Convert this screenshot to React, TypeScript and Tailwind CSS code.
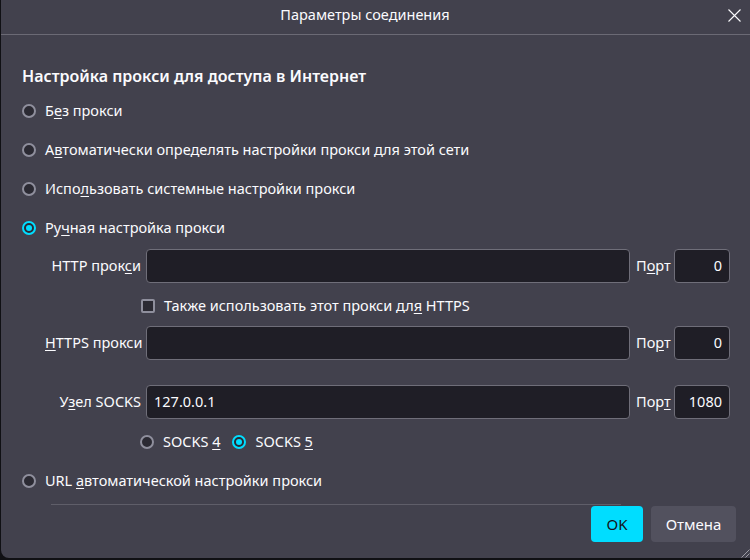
import type { ReactNode } from 'react';

const font = { fontFamily: '"Noto Sans", "Open Sans", sans-serif' };

function Radio({ checked }: { checked?: boolean }) {
    if (checked) {
        return (
            <span className="flex h-[14px] w-[14px] shrink-0 items-center justify-center rounded-full border-2 border-[#00ddff] bg-[#2b2a33]">
                <span className="h-[6px] w-[6px] rounded-full bg-[#00ddff]" />
            </span>
        );
    }
    return <span className="h-[14px] w-[14px] shrink-0 rounded-full border-2 border-[#8f8f9d] bg-[#2b2a33]" />;
}

function RadioRow({ children, checked }: { children: ReactNode; checked?: boolean }) {
    return (
        <div className="flex h-[39px] items-center gap-[9px]">
            <Radio checked={checked} />
            <span className="whitespace-nowrap">{children}</span>
        </div>
    );
}

function Field({ value, className }: { value?: string; className?: string }) {
    return (
        <div
            className={`flex h-[34px] shrink-0 items-center rounded-[4px] border border-[#6f6e79] bg-[#1f1e26] px-[7px] ${className ?? ''}`}
        >
            {value}
        </div>
    );
}

function ProxyRow({ label, host, port, portLabel }: { label: ReactNode; host?: string; port: string; portLabel: ReactNode }) {
    return (
        <div className="flex h-[34px] items-center">
            <div className="w-[100px] shrink-0 whitespace-nowrap pr-[4px] text-right">{label}</div>
            <Field value={host} className="ml-[1px] w-[484px]" />
            <div className="w-[44px] shrink-0 whitespace-nowrap pl-[6px]">{portLabel}</div>
            <Field value={port} className="w-[56px] justify-end" />
        </div>
    );
}

export default function App() {
    return (
        <div className="h-[560px] w-[750px] overflow-hidden bg-[#101014] text-[14.5px] text-[#fbfbfe]" style={font}>
            <div className="relative ml-px flex h-[558px] flex-col rounded-bl-[8px] bg-[#42414d]">
                <div className="flex h-[35px] shrink-0 items-center border-b border-[#6b6a75] pb-[4px]">
                    <div className="flex-1 pl-[1px] text-center text-[14.5px]">Параметры соединения</div>
                    <div className="flex w-[22px] items-center">
                        <svg width="13" height="13" viewBox="0 0 13 13" fill="none" stroke="#fbfbfe" strokeWidth="1.1">
                            <path d="M0.5 0.5l12 12M12.5 0.5l-12 12" />
                        </svg>
                    </div>
                </div>

                <div className="flex flex-1 flex-col pl-[21px]">
                    <div className="mt-[28px] h-[26px] whitespace-nowrap text-[16px] font-semibold leading-[26px]">
                        Настройка прокси для доступа в Интернет
                    </div>
                    <div className="mt-[2px]">
                        <RadioRow>
                            Б<u className="underline-offset-2">е</u>з прокси
                        </RadioRow>
                        <RadioRow>
                            А<u className="underline-offset-2">в</u>томатически определять настройки прокси для этой сети
                        </RadioRow>
                        <RadioRow>
                            Испо<u className="underline-offset-2">л</u>ьзовать системные настройки прокси
                        </RadioRow>
                        <RadioRow checked>
                            Ру<u className="underline-offset-2">ч</u>ная настройка прокси
                        </RadioRow>
                    </div>

                    <div className="ml-[23px] mt-[2px] flex flex-col">
                        <ProxyRow
                            label={
                                <>
                                    HTTP прок<u className="underline-offset-2">с</u>и
                                </>
                            }
                            port="0"
                            portLabel={
                                <>
                                    П<u className="underline-offset-2">о</u>рт
                                </>
                            }
                        />
                        <div className="flex h-[43px] items-center gap-[9px] pl-[96px] pt-[3px]">
                            <span className="h-[14px] w-[14px] rounded-[2px] border-2 border-[#8f8f9d] bg-[#2b2a33]" />
                            <span className="whitespace-nowrap">
                                Также использовать этот прокси дл<u className="underline-offset-2">я</u> HTTPS
                            </span>
                        </div>
                        <ProxyRow
                            label={
                                <>
                                    <u className="underline-offset-2">H</u>TTPS прокси
                                </>
                            }
                            port="0"
                            portLabel={
                                <>
                                    По<u className="underline-offset-2">р</u>т
                                </>
                            }
                        />
                        <div className="h-[25px]" />
                        <ProxyRow
                            label={
                                <>
                                    У<u className="underline-offset-2">з</u>ел SOCKS
                                </>
                            }
                            host="127.0.0.1"
                            port="1080"
                            portLabel={
                                <>
                                    Пор<u className="underline-offset-2">т</u>
                                </>
                            }
                        />
                        <div className="flex h-[46px] items-center pl-[95px]">
                            <Radio />
                            <span className="ml-[9px] whitespace-nowrap">
                                SOCKS <u className="underline-offset-2">4</u>
                            </span>
                            <span className="ml-[12px]">
                                <Radio checked />
                            </span>
                            <span className="ml-[9px] whitespace-nowrap">
                                SOCKS <u className="underline-offset-2">5</u>
                            </span>
                        </div>
                    </div>

                    <div className="flex h-[32px] items-center gap-[9px]">
                        <Radio />
                        <span className="whitespace-nowrap">
                            URL <u className="underline-offset-2">а</u>втоматической настройки прокси
                        </span>
                    </div>
                    <div className="ml-[29px] mt-[7px] h-px w-[570px] bg-[#5f5e69]" />
                </div>

                <div className="flex justify-end gap-[8px] pb-[16px] pr-[14px]">
                    <button className="h-[36px] w-[52px] rounded-[4px] bg-[#00ddff] text-[15px] text-[#15141a]">OK</button>
                    <button className="h-[36px] w-[85px] rounded-[4px] bg-[#52515e] text-[15px] text-[#fbfbfe]">Отмена</button>
                </div>

                <svg className="absolute bottom-0 right-0" width="10" height="10" viewBox="0 0 10 10" stroke="#9e9ea6" strokeWidth="1">
                    <path d="M9.5 1.5l-8 8M9.5 5.5l-4 4" />
                </svg>
            </div>
        </div>
    );
}
